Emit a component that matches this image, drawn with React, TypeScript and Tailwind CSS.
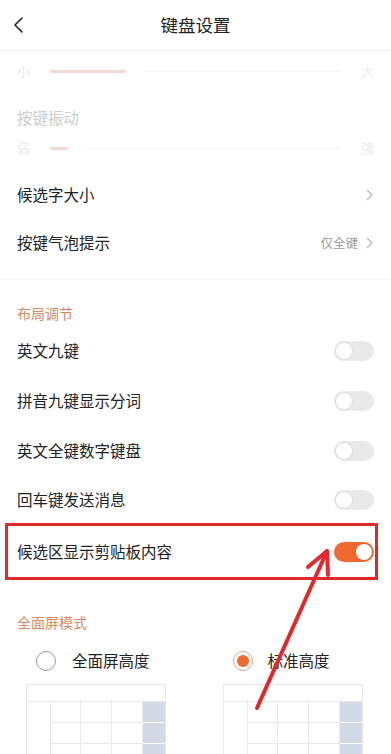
import React from 'react';

const FONT = { fontFamily: '"Noto Sans CJK SC", "Noto Sans", sans-serif' };

function Toggle({ on = false }: { on?: boolean }) {
  return (
    <span
      className={`flex h-[20px] w-[40px] items-center rounded-full p-[2px] ${on ? 'justify-end bg-[#ef6a2f]' : 'justify-start bg-[#e9e9e9]'}`}
    >
      <span className="h-[16px] w-[16px] rounded-full bg-white shadow-[0_0_2px_rgba(0,0,0,0.15)]" />
    </span>
  );
}

function Chevron() {
  return (
    <svg width="8" height="12" viewBox="0 0 8 12" fill="none">
      <path d="M1.5 1.5 L6 6 L1.5 10.5" stroke="#b5b5b5" strokeWidth="1.2" strokeLinecap="round" strokeLinejoin="round" />
    </svg>
  );
}

function SliderRow({ left, right, fill }: { left: string; right: string; fill: number }) {
  return (
    <div className="flex h-full items-center px-[17px]">
      <span className="w-[33px] text-[13px] text-[#ececec]">{left}</span>
      <div className="flex flex-1 items-center">
        <span className="h-[3px] rounded-full bg-[#f5d9d6]" style={{ width: fill }} />
        <span className="ml-[18px] h-[1px] flex-1 bg-[#f3f3f3]" />
      </div>
      <span className="ml-[22px] text-[13px] text-[#ececec]">{right}</span>
    </div>
  );
}

function ToggleRow({ label, h }: { label: string; h: string }) {
  return (
    <div className={`flex ${h} items-center justify-between pl-[17px] pr-[17px]`}>
      <span className="text-[15.5px] text-[#222]">{label}</span>
      <Toggle />
    </div>
  );
}

function KeyboardPreview() {
  return (
    <div className="w-[140px] border border-[#e8e8e8] bg-white">
      <div className="h-[17px] border-b border-[#e8e8e8]" />
      <div className="grid grid-cols-[24px_30px_31px_31px_1fr]">
        {[0, 1, 2, 3].map((r) => (
          <React.Fragment key={r}>
            <div className="h-[21px] border-r border-[#e8e8e8]" />
            <div className="h-[21px] border-r border-b border-[#e8e8e8]" />
            <div className="h-[21px] border-r border-b border-[#e8e8e8]" />
            <div className="h-[21px] border-r border-b border-[#e8e8e8]" />
            <div className="h-[21px] border-b border-white bg-[#d3d9e6]" />
          </React.Fragment>
        ))}
      </div>
    </div>
  );
}

export default function App() {
  return (
    <div className="relative h-[754px] w-[391px] overflow-hidden bg-white" style={FONT}>
      {/* header */}
      <header className="grid h-[51px] grid-cols-[60px_1fr_60px] items-center border-b border-[#efefef]">
        <span className="pl-[12px]">
          <svg width="14" height="18" viewBox="0 0 14 18" fill="none">
            <path d="M10 2 L3 9 L10 16" stroke="#222" strokeWidth="1.6" strokeLinecap="round" strokeLinejoin="round" />
          </svg>
        </span>
        <h1 className="text-center text-[17.5px] text-[#222]">键盘设置</h1>
        <span />
      </header>

      {/* faded section */}
      <div className="h-[40px]">
        <SliderRow left="小" right="大" fill={76} />
      </div>
      <div className="mt-[12px] flex h-[30px] items-center px-[17px] text-[15.5px] text-[#cccccc]">按键振动</div>
      <div className="h-[30px]">
        <SliderRow left="弱" right="强" fill={18} />
      </div>

      <div className="mt-[8px] flex h-[48px] items-center justify-between px-[17px]">
        <span className="text-[15.5px] text-[#222]">候选字大小</span>
        <Chevron />
      </div>
      <div className="flex h-[48px] items-center justify-between px-[17px]">
        <span className="text-[15.5px] text-[#222]">按键气泡提示</span>
        <span className="flex items-center gap-[8px] text-[12.5px] text-[#9a9a9a]">
          仅全键 <Chevron />
        </span>
      </div>

      <div className="mt-[12px] h-[1px] bg-[#f6f6f6]" />

      {/* layout */}
      <div className="flex h-[46px] items-end px-[17px] pb-[3px]">
        <span className="text-[14px] leading-[20px] text-[#d98a5e]">布局调节</span>
      </div>
      <ToggleRow label="英文九键" h="h-[50px]" />
      <ToggleRow label="拼音九键显示分词" h="h-[50px]" />
      <ToggleRow label="英文全键数字键盘" h="h-[50px]" />
      <ToggleRow label="回车键发送消息" h="h-[47px]" />

      <div className="ml-[5px] mr-[13px] flex h-[57px] items-center justify-between border-[3px] border-[#e3282b] pl-[9px] pr-[1px]">
        <span className="text-[15.5px] text-[#222]">候选区显示剪贴板内容</span>
        <Toggle on />
      </div>

      {/* full screen mode */}
      <div className="px-[17px] pb-[8px] pt-[32px]">
        <span className="block text-[14px] leading-[20px] text-[#d98a5e]">全面屏模式</span>
      </div>
      <div className="grid grid-cols-2">
        <div>
          <label className="flex h-[42px] items-center gap-[16px] pl-[36px]">
            <span className="h-[20px] w-[20px] rounded-full border border-[#9a9a9a]" />
            <span className="text-[15.5px] text-[#222]">全面屏高度</span>
          </label>
          <div className="mt-[2px] pl-[26px]">
            <KeyboardPreview />
          </div>
        </div>
        <div className="pl-[1px]">
          <label className="flex h-[42px] items-center gap-[15px] pl-[36px]">
            <span className="flex h-[20px] w-[20px] items-center justify-center rounded-full border-[1.5px] border-[#d9a48a]">
              <span className="h-[12px] w-[12px] rounded-full bg-[#ee6a2e]" />
            </span>
            <span className="text-[15.5px] text-[#222]">标准高度</span>
          </label>
          <div className="mt-[2px] pl-[26px]">
            <KeyboardPreview />
          </div>
        </div>
      </div>

      {/* annotation arrow */}
      <svg className="pointer-events-none absolute left-0 top-0" width="391" height="754" viewBox="0 0 391 754" fill="none">
        <path d="M257 708 L327 551" stroke="#e3282b" strokeWidth="4" strokeLinecap="round" />
        <path d="M308 567 L327 551 L328 575" stroke="#e3282b" strokeWidth="4" strokeLinecap="round" strokeLinejoin="round" />
      </svg>
    </div>
  );
}
